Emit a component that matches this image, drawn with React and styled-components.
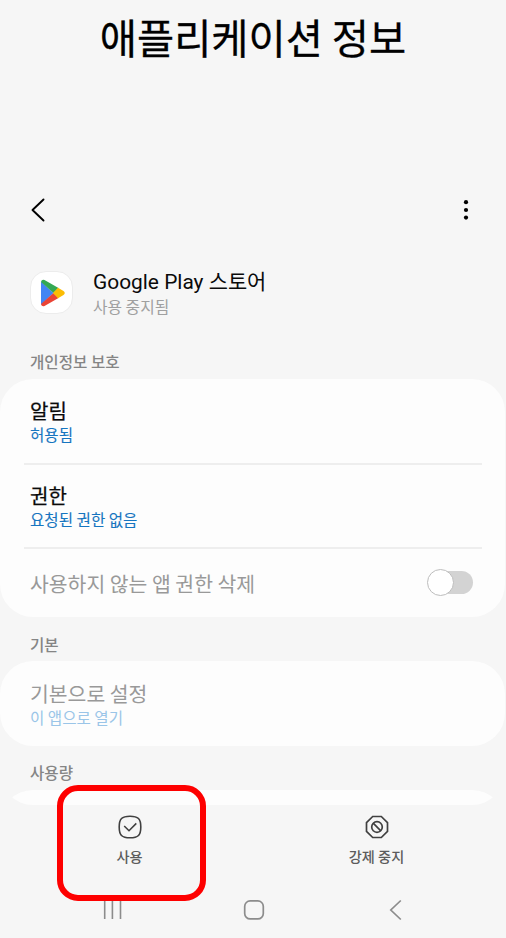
import styled, { createGlobalStyle } from "styled-components";

const GlobalStyle = createGlobalStyle`
  * {
    box-sizing: border-box;
  }
  body {
    margin: 0;
    background-color: #f6f6f6;
    font-family: "Noto Sans CJK KR", sans-serif;
  }
`;

const Screen = styled.div`
  position: relative;
  display: flex;
  flex-direction: column;
  width: 506px;
  height: 938px;
  overflow: hidden;
  background-color: #f6f6f6;
`;

const Title = styled.h1`
  height: 180px;
  margin: 0;
  padding-top: 7px;
  font-size: 40.4px;
  font-weight: 400;
  line-height: 60px;
  text-align: center;
  white-space: nowrap;
  color: #000;
  -webkit-text-stroke: 0.3px;
`;

const Toolbar = styled.div`
  display: flex;
  flex-shrink: 0;
  align-items: center;
  justify-content: space-between;
  height: 60px;
  padding: 0 36px 0 28px;
`;

const Content = styled.div`
  flex-shrink: 0;
  width: 505px;
  height: 565px;
  overflow: hidden;
  border-radius: 0 0 33px 33px;
`;

const AppRow = styled.div`
  display: flex;
  align-items: center;
  gap: 20px;
  height: 105px;
  padding-left: 30px;
`;

const AppIcon = styled.div`
  display: flex;
  width: 43px;
  height: 43px;
  border: 1px solid #ececec;
  border-radius: 16px;
  background-color: #fff;
`;

const AppText = styled.div`
  display: flex;
  flex-direction: column;
`;

const AppName = styled.div`
  padding-top: 1px;
  font-family: Roboto, "Noto Sans CJK KR", sans-serif;
  font-size: 20.9px;
  line-height: 27px;
  white-space: nowrap;
  color: #0a0a0a;
`;

const AppState = styled.div`
  font-size: 15.8px;
  line-height: 21px;
  color: #a0a0a0;
`;

const SectionLabel = styled.div`
  height: ${(props) => props.$height}px;
  padding-left: 30px;
  font-size: 15.6px;
  font-weight: 500;
  line-height: ${(props) => props.$line}px;
  color: #858585;
`;

const Card = styled.div`
  width: 505px;
  padding: 0 23px 0 24px;
  border-radius: 33px;
  background-color: #fdfdfd;
`;

const Row = styled.div`
  display: flex;
  align-items: center;
  justify-content: space-between;
  height: ${(props) => props.$height}px;
  padding: 0 9px 0 6px;
  border-bottom: ${(props) => (props.$last ? "none" : "2px solid #eeeeee")};
`;

const RowTitle = styled.div`
  font-size: ${(props) => (props.$disabled ? 20.45 : 20)}px;
  font-weight: 400;
  line-height: ${(props) => (props.$disabled ? 28 : 27)}px;
  color: ${(props) => (props.$disabled ? "#999" : "#0a0a0a")};
  -webkit-text-stroke: ${(props) => (props.$disabled ? 0 : 0.25)}px;
`;

const RowValue = styled.div`
  font-size: 15.6px;
  line-height: 21px;
  color: ${(props) => (props.$disabled ? "#9ac5e8" : "#1675c0")};
  -webkit-text-stroke: ${(props) => (props.$disabled ? 0 : 0.1)}px;
`;

const Switch = styled.div`
  display: flex;
  align-items: center;
  width: 45px;
  height: 23px;
  margin-top: -1px;
  border-radius: 12px;
  background-color: #d3d3d3;
`;

const Knob = styled.div`
  flex-shrink: 0;
  width: 27px;
  height: 27px;
  margin-left: -1px;
  border: 1px solid #bdbdbd;
  border-radius: 50%;
  background-color: #fff;
`;

const Actions = styled.div`
  display: grid;
  flex-shrink: 0;
  grid-template-columns: 259px 235px;
  height: 77px;
  padding-top: 10px;
`;

const Action = styled.div`
  display: flex;
  flex-direction: column;
  align-items: center;
  gap: 7px;
  font-size: 14.2px;
  font-weight: 500;
  line-height: 20px;
  color: #5c5c5c;
`;

const NavBar = styled.div`
  display: flex;
  flex-shrink: 0;
  align-items: center;
  height: 56px;
  padding-left: 102px;
`;

const HomeButton = styled.svg`
  margin: 0 122px 0 119px;
`;

const Highlight = styled.div`
  position: absolute;
  top: 785px;
  left: 57px;
  width: 149px;
  height: 116px;
  border: 6px solid #fe0000;
  border-radius: 21px;
`;

function PlayLogo() {
  return (
    <svg width="41" height="41" viewBox="0 0 41 41">
      <path d="M10 9.5 L22.5 21 L10 33 Q10 33 10 31 Z" fill="#4285f4" />
      <path d="M10 10 Q10.5 7.2 13.5 8 L27.5 16 L22.5 21 Z" fill="#34a853" />
      <path d="M10 32 Q10.5 34.8 13.5 34 L27.5 26 L22.5 21 Z" fill="#ea4335" />
      <path d="M27 15.7 L32.5 19 Q35 21 32.5 23 L27 26.3 L22 21 Z" fill="#fbbc04" />
    </svg>
  );
}

function BackIcon() {
  return (
    <svg width="20" height="26" viewBox="0 0 20 26" fill="none">
      <path d="M15.5 2.5 L4.5 13 L15.5 23.5" stroke="#000" strokeWidth="1.9" strokeLinecap="round" strokeLinejoin="round" />
    </svg>
  );
}

function MoreIcon() {
  return (
    <svg width="8" height="24" viewBox="0 0 8 24">
      <circle cx="4" cy="4.2" r="2.1" />
      <circle cx="4" cy="12" r="2.1" />
      <circle cx="4" cy="19.6" r="2.1" />
    </svg>
  );
}

function EnableIcon() {
  return (
    <svg width="24" height="24" viewBox="0 0 24 24" fill="none" stroke="#404040" strokeWidth="1.6">
      <path d="M12 1.2 C20.2 1.2 22.8 3.8 22.8 12 C22.8 20.2 20.2 22.8 12 22.8 C3.8 22.8 1.2 20.2 1.2 12 C1.2 3.8 3.8 1.2 12 1.2 Z" />
      <path d="M6.2 11 L11 15.7 L18.3 8.4" />
    </svg>
  );
}

function StopIcon() {
  return (
    <svg width="24" height="24" viewBox="0 0 24 24" fill="none" stroke="#404040" strokeWidth="1.7">
      <path d="M7.7 1.5 H16.3 L22.5 7.7 V16.3 L16.3 22.5 H7.7 L1.5 16.3 V7.7 Z" />
      <circle cx="12" cy="12" r="5.3" />
      <path d="M8.2 8.2 L15.8 15.8" />
    </svg>
  );
}

export default function App() {
  return (
    <>
      <GlobalStyle />
      <Screen>
        <Title>애플리케이션 정보</Title>
        <Toolbar>
          <BackIcon />
          <MoreIcon />
        </Toolbar>
        <Content>
          <AppRow>
            <AppIcon>
              <PlayLogo />
            </AppIcon>
            <AppText>
              <AppName>Google Play 스토어</AppName>
              <AppState>사용 중지됨</AppState>
            </AppText>
          </AppRow>
          <SectionLabel $height={34} $line={32}>개인정보 보호</SectionLabel>
          <Card>
            <Row $height={86}>
              <div>
                <RowTitle>알림</RowTitle>
                <RowValue>허용됨</RowValue>
              </div>
            </Row>
            <Row $height={84}>
              <div>
                <RowTitle>권한</RowTitle>
                <RowValue>요청된 권한 없음</RowValue>
              </div>
            </Row>
            <Row $height={68} $last>
              <RowTitle $disabled>사용하지 않는 앱 권한 삭제</RowTitle>
              <Switch>
                <Knob />
              </Switch>
            </Row>
          </Card>
          <SectionLabel $height={44} $line={54}>기본</SectionLabel>
          <Card>
            <Row $height={85} $last>
              <div>
                <RowTitle $disabled>기본으로 설정</RowTitle>
                <RowValue $disabled>이 앱으로 열기</RowValue>
              </div>
            </Row>
          </Card>
          <SectionLabel $height={44} $line={53}>사용량</SectionLabel>
          <Card>
            <Row $height={85} $last />
          </Card>
        </Content>
        <Actions>
          <Action>
            <EnableIcon />
            사용
          </Action>
          <Action>
            <StopIcon />
            강제 중지
          </Action>
        </Actions>
        <NavBar>
          <svg width="22" height="22" viewBox="0 0 22 22" stroke="#8c8c8c" strokeWidth="1.6">
            <path d="M2.7 1 V20 M10.4 1 V20 M18.5 1 V20" />
          </svg>
          <HomeButton width="22" height="22" viewBox="0 0 22 22" fill="none" stroke="#8c8c8c" strokeWidth="1.7">
            <rect x="1.7" y="1.9" width="18.6" height="18" rx="5.5" />
          </HomeButton>
          <svg width="16" height="22" viewBox="0 0 16 22" fill="none" stroke="#8c8c8c" strokeWidth="1.7">
            <path d="M13.8 1.5 L3.8 11 L13.8 20.5" />
          </svg>
        </NavBar>
        <Highlight />
      </Screen>
    </>
  );
}
